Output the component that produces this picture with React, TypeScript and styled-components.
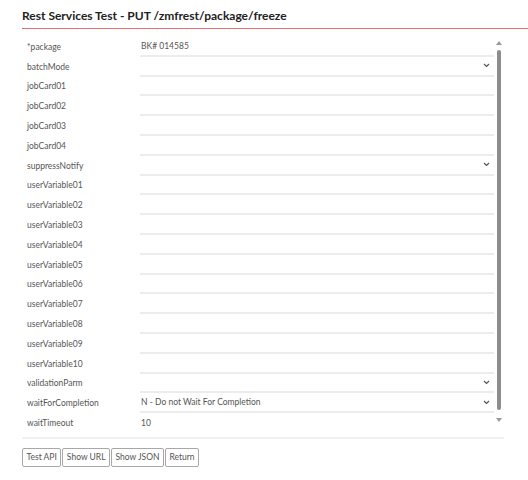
import React from "react";
import styled, { createGlobalStyle } from "styled-components";

const Global = createGlobalStyle`
  html, body { margin: 0; padding: 0; background: #fff; }
  body { font-family: "Lato", "Open Sans", Arial, sans-serif; color: #444; }
`;

const Page = styled.div`
  padding: 8px 0 0 22px;
  width: 506px;
`;

const Header = styled.div`
  border-bottom: 1px solid #e36f6f;
  padding: 0 0 4px 0;
`;

const Title = styled.h1`
  margin: 0;
  font-size: 12px;
  font-weight: 700;
  color: #222;
  line-height: 16px;
`;

const Body = styled.div`
  width: 482px;
  margin-top: 8px;
  border-bottom: 2px solid #f0f0f0;
  padding-bottom: 4px;
  display: flex;
`;

const List = styled.div`
  width: 472px;
`;

const Rail = styled.div`
  width: 10px;
  display: flex;
  flex-direction: column;
  align-items: center;
`;

const Arrow = styled.div`
  height: 11px;
  display: flex;
  align-items: center;
  justify-content: center;
`;

const Thumb = styled.div`
  width: 4px;
  height: 360px;
  margin: 2px 0 4px;
  background: #8c8c8c;
  border-radius: 2px;
`;

const Row = styled.div`
  display: grid;
  grid-template-columns: 118px 354px;
  height: 19.8px;
  align-items: stretch;
`;

const Label = styled.div`
  font-size: 8.5px;
  color: #555;
  padding-left: 5px;
  display: flex;
  align-items: center;
`;

const Field = styled.div<{ $plain?: boolean }>`
  display: flex;
  align-items: center;
  justify-content: space-between;
  font-size: 8.5px;
  color: #555;
  padding: 0 4px 0 1px;
  border-bottom: ${(p) => (p.$plain ? "none" : "2px solid #ececec")};
  box-sizing: border-box;
`;

const Chevron = () => (
  <svg width="7" height="5" viewBox="0 0 7 5">
    <path d="M1 1 L3.5 3.5 L6 1" stroke="#555" strokeWidth="1.2" fill="none" />
  </svg>
);

const Tri = ({ up }: { up?: boolean }) => (
  <svg width="6" height="4" viewBox="0 0 6 4">
    <path d={up ? "M0 4 L3 0 L6 4 Z" : "M0 0 L3 4 L6 0 Z"} fill="#9a9a9a" />
  </svg>
);

const Buttons = styled.div`
  display: flex;
  gap: 1px;
  margin-top: 9px;
`;

const Button = styled.button`
  font-family: inherit;
  font-size: 8.5px;
  color: #555;
  background: #fff;
  border: 1px solid #a8a8a8;
  border-radius: 2px;
  height: 19px;
  padding: 0 3.5px;
  cursor: pointer;
`;

type F = { label: string; value?: string; select?: boolean; plain?: boolean };

const fields: F[] = [
  { label: "*package", value: "BK# 014585" },
  { label: "batchMode", select: true },
  { label: "jobCard01" },
  { label: "jobCard02" },
  { label: "jobCard03" },
  { label: "jobCard04" },
  { label: "suppressNotify", select: true },
  { label: "userVariable01" },
  { label: "userVariable02" },
  { label: "userVariable03" },
  { label: "userVariable04" },
  { label: "userVariable05" },
  { label: "userVariable06" },
  { label: "userVariable07" },
  { label: "userVariable08" },
  { label: "userVariable09" },
  { label: "userVariable10" },
  { label: "validationParm", select: true },
  { label: "waitForCompletion", value: "N - Do not Wait For Completion", select: true },
  { label: "waitTimeout", value: "10", plain: true },
];

export default function App() {
  return (
    <>
      <Global />
      <Page>
        <Header>
          <Title>Rest Services Test - PUT /zmfrest/package/freeze</Title>
        </Header>
        <Body>
          <List>
            {fields.map((f) => (
              <Row key={f.label}>
                <Label>{f.label}</Label>
                <Field $plain={f.plain}>
                  <span>{f.value ?? ""}</span>
                  {f.select && <Chevron />}
                </Field>
              </Row>
            ))}
          </List>
          <Rail>
            <Arrow><Tri up /></Arrow>
            <Thumb />
            <Arrow><Tri /></Arrow>
          </Rail>
        </Body>
        <Buttons>
          <Button>Test API</Button>
          <Button>Show URL</Button>
          <Button>Show JSON</Button>
          <Button>Return</Button>
        </Buttons>
      </Page>
    </>
  );
}
